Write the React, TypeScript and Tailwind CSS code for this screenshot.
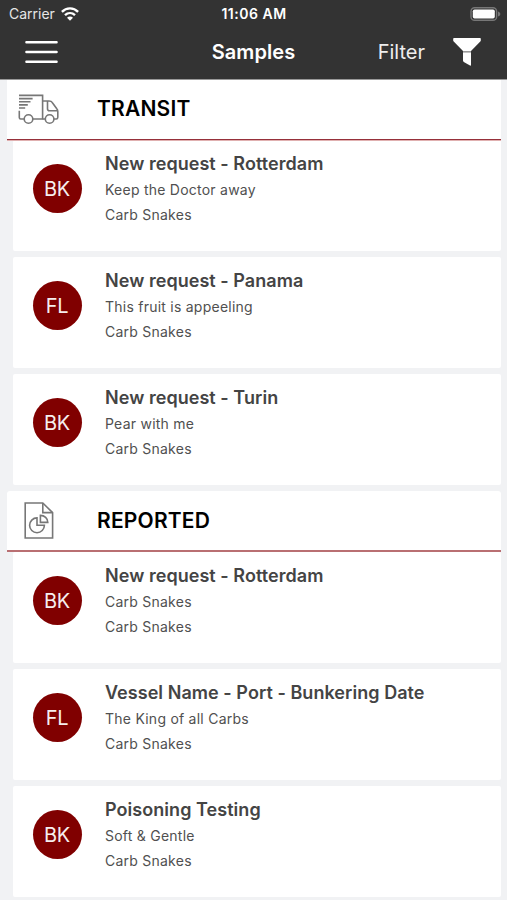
type Sample = { initials: string; title: string; product: string; customer: string };

const transit: Sample[] = [
  { initials: "BK", title: "New request - Rotterdam", product: "Keep the Doctor away", customer: "Carb Snakes" },
  { initials: "FL", title: "New request - Panama", product: "This fruit is appeeling", customer: "Carb Snakes" },
  { initials: "BK", title: "New request - Turin", product: "Pear with me", customer: "Carb Snakes" },
];

const reported: Sample[] = [
  { initials: "BK", title: "New request - Rotterdam", product: "Carb Snakes", customer: "Carb Snakes" },
  { initials: "FL", title: "Vessel Name - Port - Bunkering Date", product: "The King of all Carbs", customer: "Carb Snakes" },
  { initials: "BK", title: "Poisoning Testing", product: "Soft & Gentle", customer: "Carb Snakes" },
];

function MenuIcon() {
  return (
    <svg className="h-[24px] w-[33px]" viewBox="0 0 33 24" stroke="#fff" strokeWidth="2.4" strokeLinecap="round">
      <path d="M1.4 2.3h30.2M1.4 12h30.2M1.4 21.7h30.2" />
    </svg>
  );
}

function WifiIcon() {
  return (
    <svg className="h-[14px] w-[18px]" viewBox="0 0 18 14" fill="none" stroke="#fff" strokeWidth="2.4">
      <path d="M.9 4.8C5.4.2 12.6.2 17.1 4.8" />
      <path d="M4 8.2c2.9-2.8 7.1-2.8 10 0" />
      <path d="M9 13.8 6 10.8c1.7-1.6 4.3-1.6 6 0Z" fill="#fff" stroke="none" />
    </svg>
  );
}

function BatteryIcon() {
  return (
    <svg className="h-[14px] w-[31px]" viewBox="0 0 31 14" fill="none">
      <rect x="1" y=".7" width="25.6" height="12.6" rx="3.6" stroke="#777" strokeWidth="1.4" />
      <rect x="2.8" y="2.4" width="22" height="9.2" rx="1.8" fill="#fff" />
      <path d="M28 4.4v5.2c1.8-.6 2.3-1.6 2.3-2.6s-.5-2-2.3-2.6Z" fill="#777" />
    </svg>
  );
}

function FunnelIcon() {
  return (
    <svg className="h-[30px] w-[28px]" viewBox="0 0 28 30" fill="#fff">
      <path d="M.2 1.8Q.2 1 1 1h26q.8 0 .8.8v1.6q0 .6-.5 1.1L18 14H10L.7 4.5Q.2 4 .2 3.4Z" />
      <path d="M10 15.2h8v12.6q0 1.2-1 .7l-6.2-3.6q-.8-.5-.8-1.4Z" />
      <path d="M10 14h8v1.2h-8Z" fill="#999" />
    </svg>
  );
}

function TruckIcon() {
  return (
    <svg className="h-[31px] w-[41px]" viewBox="0 0 41 31" fill="none" stroke="#777" strokeWidth="1.6">
      <path d="M1 1.4h23.6V25H15" />
      <path d="M1 4.6h13.6M1 7.8h11.5M1 10.9h8.8M1 14h6.2" />
      <path d="M1.3 16.8v6.8Q1.3 25 2.7 25H6M24.6 7H31q2.4 0 3.4 1.7l4.4 6q1 1.3 1 2.8v5.8q0 1.7-1.6 1.7H36M24.6 25h2.6" />
      <path d="M39 16.8h-7.5q-2 0-2-2V7" />
      <circle cx="10.5" cy="25" r="4.3" />
      <circle cx="31.6" cy="25" r="4.3" />
    </svg>
  );
}

function ReportIcon() {
  return (
    <svg className="h-[37px] w-[30px]" viewBox="0 0 30 37" fill="none" stroke="#777" strokeWidth="1.6">
      <path d="M1.2 1h17.6l9.8 9.6V36H1.2Z" />
      <path d="M18.8 1v9.6h9.8" />
      <path d="M13 15.9a7.4 7.4 0 1 0 7.4 7.4H13Z" />
      <path d="M16.4 13.4v7h7.4a7.4 7 0 0 0-7.4-7Z" />
    </svg>
  );
}

function SampleCard({ sample }: { sample: Sample }) {
  return (
    <li className="ml-[6px] flex h-[111px] rounded-[2px] bg-white pl-[19.5px]">
      <div className="mt-[24px] flex h-[49px] w-[49px] shrink-0 items-center justify-center rounded-full bg-[#800000] text-[20px] tracking-[-0.2px] text-[#f5eeee]">
        {sample.initials}
      </div>
      <div className="ml-[23.5px] pt-[11px] text-[#505050]">
        <h3 className="text-[18px] leading-[26px] font-semibold tracking-[0.05px] text-[#444]">{sample.title}</h3>
        <p className="text-[14px] leading-[25px] tracking-[0.24px]">{sample.product}</p>
        <p className="text-[14px] leading-[25px] tracking-[0.24px]">{sample.customer}</p>
      </div>
    </li>
  );
}

type SectionProps = {
  title: string;
  icon: React.ReactNode;
  samples: Sample[];
  headingClass: string;
};

function Section({ title, icon, samples, headingClass }: SectionProps) {
  return (
    <section className="mb-[6px]">
      <div className={`relative flex items-center bg-white ${headingClass}`}>
        <div className="flex w-[90px] shrink-0">{icon}</div>
        <h2 className="text-[21px] leading-[28px] font-semibold tracking-[0.2px] text-black">{title}</h2>
      </div>
      <ul className="flex flex-col gap-[6px]">
        {samples.map((s) => (
          <SampleCard key={s.title} sample={s} />
        ))}
      </ul>
    </section>
  );
}

export default function App() {
  return (
    <div className="h-[900px] w-full overflow-hidden bg-[#f1f2f4] font-['Inter',sans-serif]">
      <header className="h-[80px] border-b border-[#999] bg-[#333] text-white">
        <div className="grid h-[27px] grid-cols-3 items-center pr-[6px] pl-[9px]">
          <div className="flex items-center gap-[6px] text-[14px] text-[#e6e6e6]">
            Carrier
            <WifiIcon />
          </div>
          <div className="pr-[2px] text-center text-[14px] font-semibold tracking-[0.5px] whitespace-nowrap">11:06 AM</div>
          <div className="flex justify-end">
            <BatteryIcon />
          </div>
        </div>
        <div className="grid h-[50px] grid-cols-3 items-center pr-[26px] pl-[25px]">
          <button type="button" aria-label="Menu">
            <MenuIcon />
          </button>
          <h1 className="pl-[1px] text-center text-[20px] font-semibold tracking-[0.1px]">Samples</h1>
          <button type="button" className="flex items-center justify-end gap-[28px] text-[20px] text-[#eee]">
            Filter
            <FunnelIcon />
          </button>
        </div>
      </header>
      <main className="pr-[6px] pl-[7px]">
        <Section
          title="TRANSIT"
          icon={
            <div className="pt-[2px] pl-[11px]">
              <TruckIcon />
            </div>
          }
          samples={transit}
          headingClass="h-[60px] border-b border-[#96303a] pb-[2px] shadow-[0_1px_0_#e0b0b0]"
        />
        <Section
          title="REPORTED"
          icon={
            <div className="pl-[16.5px]">
              <ReportIcon />
            </div>
          }
          samples={reported}
          headingClass="h-[61px] rounded-t-[3px] border-b-2 border-[#b96f72]"
        />
      </main>
    </div>
  );
}
